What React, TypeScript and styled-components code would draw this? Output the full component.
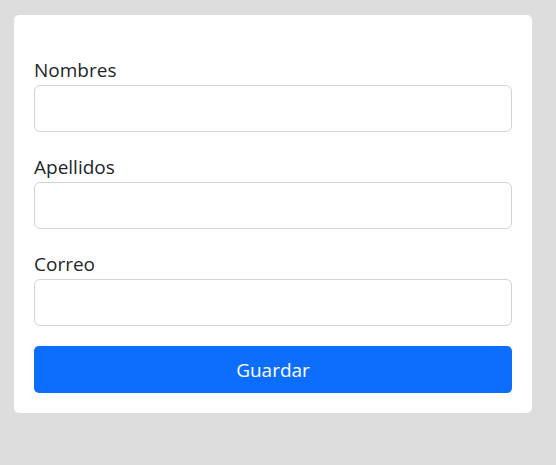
import React from "react";
import styled, { createGlobalStyle } from "styled-components";

const Global = createGlobalStyle`
  html, body { margin: 0; padding: 0; background: #dddddd; }
  body { font-family: "Segoe UI", "Open Sans", "Noto Sans", sans-serif; color: #212529; }
  * { box-sizing: border-box; }
`;

const Page = styled.div`
  padding: 15px 0 0 14px;
  min-height: 465px;
`;

const Card = styled.form`
  width: 518px;
  background: #ffffff;
  border-radius: 5px;
  padding: 40px 20px 20px;
  display: flex;
  flex-direction: column;
  gap: 20px;
`;

const Field = styled.div`
  display: flex;
  flex-direction: column;
`;

const Label = styled.label`
  font-size: 19px;
  line-height: 30px;
  color: #212529;
`;

const Input = styled.input`
  height: 47px;
  width: 100%;
  border: 1px solid #ced4da;
  border-radius: 6px;
  padding: 0 16px;
  font: inherit;
  font-size: 19px;
  background: #fff;
  outline: none;
`;

const Button = styled.button`
  height: 47px;
  width: 100%;
  border: none;
  border-radius: 5px;
  background: #0d6efd;
  color: #ffffff;
  font-family: inherit;
  font-size: 19px;
  cursor: pointer;
`;

const fields = ["Nombres", "Apellidos", "Correo"];

export default function App() {
  return (
    <>
      <Global />
      <Page>
        <Card onSubmit={(e) => e.preventDefault()}>
          {fields.map((f) => (
            <Field key={f}>
              <Label htmlFor={f}>{f}</Label>
              <Input id={f} type={f === "Correo" ? "email" : "text"} />
            </Field>
          ))}
          <Button type="submit">Guardar</Button>
        </Card>
      </Page>
    </>
  );
}
